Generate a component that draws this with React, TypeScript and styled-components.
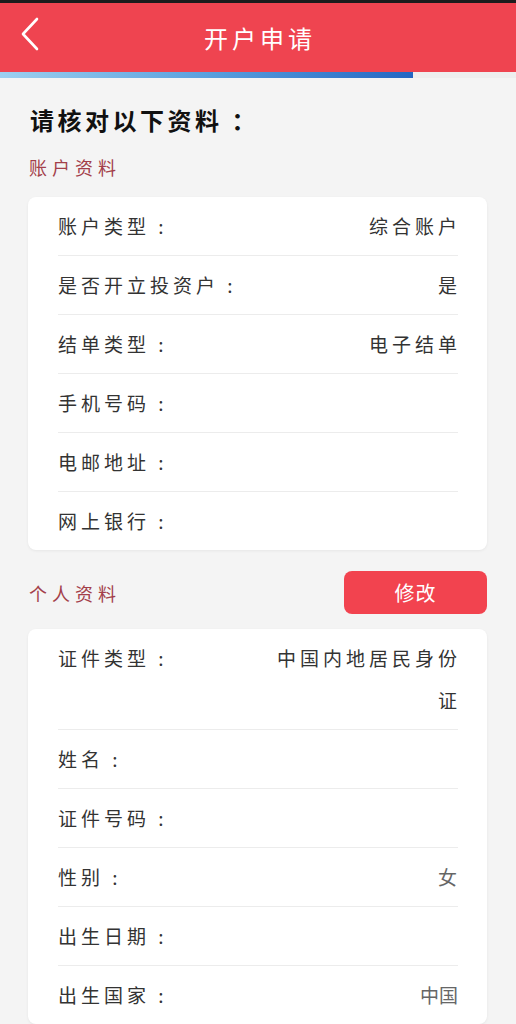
import styled, { createGlobalStyle } from "styled-components";

const GlobalStyle = createGlobalStyle`
  body {
    margin: 0;
    background: #f4f4f4;
    font-family: "Noto Sans CJK SC", "Noto Sans", sans-serif;
  }
`;

type Item = { label: string; value?: string; light?: boolean; tight?: boolean };

const accountItems: Item[] = [
  { label: "账户类型", value: "综合账户" },
  { label: "是否开立投资户", value: "是" },
  { label: "结单类型", value: "电子结单" },
  { label: "手机号码" },
  { label: "电邮地址" },
  { label: "网上银行" },
];

const personalItems: Item[] = [
  { label: "证件类型", value: "中国内地居民身份证" },
  { label: "姓名" },
  { label: "证件号码" },
  { label: "性别", value: "女", light: true },
  { label: "出生日期" },
  { label: "出生国家", value: "中国", light: true, tight: true },
];

function InfoCard({ items }: { items: Item[] }) {
  return (
    <Card>
      {items.map((item) => (
        <Row key={item.label}>
          <Label>{item.label} :</Label>
          {item.value && (
            <Value $light={item.light} $tight={item.tight}>
              {item.value}
            </Value>
          )}
        </Row>
      ))}
    </Card>
  );
}

function App() {
  return (
    <>
      <GlobalStyle />
      <StatusStrip />
      <Header>
        <BackButton>
          <svg width="20" height="34" viewBox="0 0 20 34">
            <polyline
              points="17,2 3,17 17,32"
              fill="none"
              stroke="#fff"
              strokeWidth="2.6"
              strokeLinecap="round"
              strokeLinejoin="round"
            />
          </svg>
        </BackButton>
        <Title>开户申请</Title>
      </Header>
      <Progress>
        <ProgressFill style={{ width: "80%" }} />
      </Progress>
      <Content>
        <Heading>请核对以下资料 ：</Heading>
        <SectionHead>
          <SectionTitle>账户资料</SectionTitle>
        </SectionHead>
        <InfoCard items={accountItems} />
        <SectionHead $withButton>
          <SectionTitle>个人资料</SectionTitle>
          <EditButton>修改</EditButton>
        </SectionHead>
        <InfoCard items={personalItems} />
      </Content>
    </>
  );
}

export default App;

const StatusStrip = styled.div`
  height: 3px;
  background: #1c1c1c;
`;

const Header = styled.header`
  height: 69px;
  background: #ef4450;
  display: flex;
  align-items: center;
  justify-content: center;
  position: relative;
`;

const BackButton = styled.button`
  position: absolute;
  left: 20px;
  top: 14px;
  border: 0;
  background: none;
  padding: 0;
  display: flex;
`;

const Title = styled.h1`
  margin: 0;
  color: #fff;
  font-size: 24px;
  font-weight: 400;
  letter-spacing: 4px;
  padding-left: 4px;
`;

const Progress = styled.div`
  height: 6px;
  background: #eeeeee;
`;

const ProgressFill = styled.div`
  height: 100%;
  background: linear-gradient(90deg, #9dd0f0 0%, #5aa0de 50%, #2466c2 100%);
`;

const Content = styled.main`
  padding: 26px 29px 0 28px;
`;

const Heading = styled.h2`
  margin: 0;
  font-size: 24px;
  line-height: 32px;
  font-weight: 700;
  color: #111;
  letter-spacing: 3.5px;
  padding-left: 2px;
`;

const SectionHead = styled.div<{ $withButton?: boolean }>`
  display: flex;
  align-items: center;
  justify-content: space-between;
  height: ${(p) => (p.$withButton ? "43px" : "26px")};
  margin: ${(p) => (p.$withButton ? "21px 0 15px" : "18px 0 17px")};
`;

const SectionTitle = styled.span`
  font-size: 18px;
  color: #a3404a;
  letter-spacing: 5px;
  padding-left: 1px;
`;

const EditButton = styled.button`
  width: 143px;
  height: 43px;
  border: 0;
  border-radius: 8px;
  background: #f2434f;
  color: #fff;
  font-family: inherit;
  font-size: 20px;
  letter-spacing: 1px;
`;

const Card = styled.section`
  background: #fff;
  border-radius: 8px;
  padding: 0 29px 0 30px;
  box-shadow: 0 1px 3px rgba(0, 0, 0, 0.06);
`;

const Row = styled.div`
  display: flex;
  justify-content: space-between;
  align-items: flex-start;
  padding: 8px 0;
  line-height: 42px;
  font-size: 19px;
  border-bottom: 1px solid #ececec;
  &:last-child {
    border-bottom: 0;
  }
`;

const Label = styled.span`
  color: #333;
  letter-spacing: 4px;
  white-space: nowrap;
`;

const Value = styled.span<{ $light?: boolean; $tight?: boolean }>`
  color: ${(p) => (p.$light ? "#666" : "#333")};
  letter-spacing: ${(p) => (p.$tight ? "0" : "4px")};
  margin-right: ${(p) => (p.$tight ? "0" : "-3px")};
  max-width: 195px;
  text-align: right;
`;
